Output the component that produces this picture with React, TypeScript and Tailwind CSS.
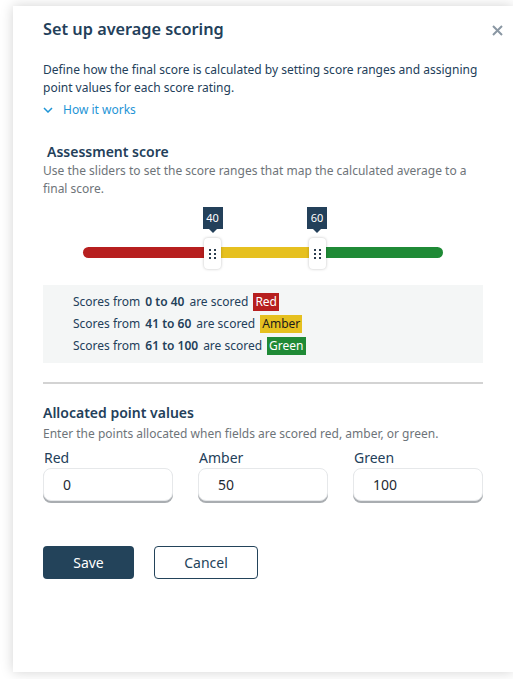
import React from 'react';

const ranges = [
  { from: '0 to 40', label: 'Red', cls: 'bg-[#b71f1f] text-white' },
  { from: '41 to 60', label: 'Amber', cls: 'bg-[#e6c01f] text-[#1a1a1a]' },
  { from: '61 to 100', label: 'Green', cls: 'bg-[#1f8a36] text-white' },
];

const points = [
  { label: 'Red', value: '0' },
  { label: 'Amber', value: '50' },
  { label: 'Green', value: '100' },
];

function Thumb({ value }: { value: string }) {
  return (
    <div className="absolute top-[-40px] flex flex-col items-center -translate-x-1/2">
      <div className="relative flex h-[22px] w-[20px] items-center justify-center bg-[#23405a] text-[11px] text-white">
        {value}
        <div className="absolute bottom-[-4px] left-1/2 h-0 w-0 -translate-x-1/2 border-x-[4px] border-t-[4px] border-x-transparent border-t-[#23405a]" />
      </div>
      <div className="mt-[9px] flex h-[31px] w-[17px] items-center justify-center rounded-[4px] bg-white shadow-[0_0_3px_rgba(0,0,0,0.25)]">
        <div className="grid grid-cols-2 gap-x-[3px] gap-y-[2px]">
          {[0, 1, 2, 3, 4, 5].map((i) => (
            <div key={i} className="h-[2px] w-[2px] bg-[#2c3e50]" />
          ))}
        </div>
      </div>
    </div>
  );
}

export default function App() {
  return (
    <div className="min-h-[679px] bg-white pl-[13px] pt-[6px] pb-[7px] font-['Noto_Sans',sans-serif]">
      <div className="relative h-[666px] bg-white pl-[30px] pr-[30px] pt-[10px] shadow-[0_0_12px_rgba(0,0,0,0.18)]">
        <button className="absolute right-[10px] top-[19px] text-[#8a97a3]">
          <svg width="11" height="11" viewBox="0 0 11 11" fill="none" stroke="currentColor" strokeWidth="2">
            <path d="M1 1 10 10M10 1 1 10" />
          </svg>
        </button>

        <h1 className="text-[16.3px] font-semibold leading-[26px] text-[#23405a]">Set up average scoring</h1>

        <p className="mt-[19px] text-[12px] leading-[18px] text-[#23405a]">
          Define how the final score is calculated by setting score ranges and assigning point values for each score rating.
        </p>
        <div className="mt-[4px] flex items-center gap-[10px] text-[12px] text-[#1f95d6]">
          <svg width="10" height="6" viewBox="0 0 10 6" fill="none" stroke="currentColor" strokeWidth="1.5">
            <path d="M1 1l4 4 4-4" />
          </svg>
          <span>How it works</span>
        </div>

        <h2 className="ml-[4px] mt-[23px] text-[14px] font-semibold leading-[20px] text-[#23405a]">Assessment score</h2>
        <p className="text-[12px] leading-[18px] text-[#6e7479]">
          Use the sliders to set the score ranges that map the calculated average to a final score.
        </p>

        <div className="relative mx-[40px] mt-[49px] flex h-[11px]">
          <div className="w-[36%] rounded-l-full bg-[#b71f1f]" />
          <div className="w-[29%] bg-[#e6c01f]" />
          <div className="flex-1 rounded-r-full bg-[#1f8a36]" />
          <div className="absolute left-[36%] top-0">
            <Thumb value="40" />
          </div>
          <div className="absolute left-[65%] top-0">
            <Thumb value="60" />
          </div>
        </div>

        <div className="mt-[27px] flex flex-col gap-[4px] bg-[#f4f6f6] py-[8px] pl-[30px] text-[12px] leading-[18px] text-[#23405a]">
          {ranges.map((r) => (
            <div key={r.label} className="flex items-center">
              <span>Scores from</span>
              <span className="ml-[5px] font-semibold">{r.from}</span>
              <span className="ml-[5px]">are scored</span>
              <span className={`ml-[5px] px-[2px] ${r.cls}`}>{r.label}</span>
            </div>
          ))}
        </div>

        <div className="mt-[19px] h-[2px] bg-[#d3d3d3]" />

        <h2 className="mt-[19px] text-[14px] font-semibold leading-[20px] text-[#23405a]">Allocated point values</h2>
        <p className="mt-[2px] text-[12px] leading-[18px] text-[#6e7479]">
          Enter the points allocated when fields are scored red, amber, or green.
        </p>

        <div className="mt-[6px] grid grid-cols-3 gap-[25px]">
          {points.map((p) => (
            <div key={p.label} className="flex flex-col">
              <label className="ml-[1px] text-[14px] leading-[18px] text-[#23405a]">{p.label}</label>
              <input
                readOnly
                value={p.value}
                className="mt-[1px] h-[33px] rounded-[8px] border border-[#e6e8ea] bg-white px-[19px] text-[14px] text-[#1f2a33] shadow-[0_2px_0_#a9adb1] outline-none"
              />
            </div>
          ))}
        </div>

        <div className="mt-[45px] flex gap-[20px]">
          <button className="h-[33px] w-[91px] rounded-[4px] bg-[#23435a] text-[14px] text-white">Save</button>
          <button className="h-[33px] w-[104px] rounded-[4px] border border-[#23435a] bg-white text-[14px] text-[#23435a]">
            Cancel
          </button>
        </div>
      </div>
    </div>
  );
}
